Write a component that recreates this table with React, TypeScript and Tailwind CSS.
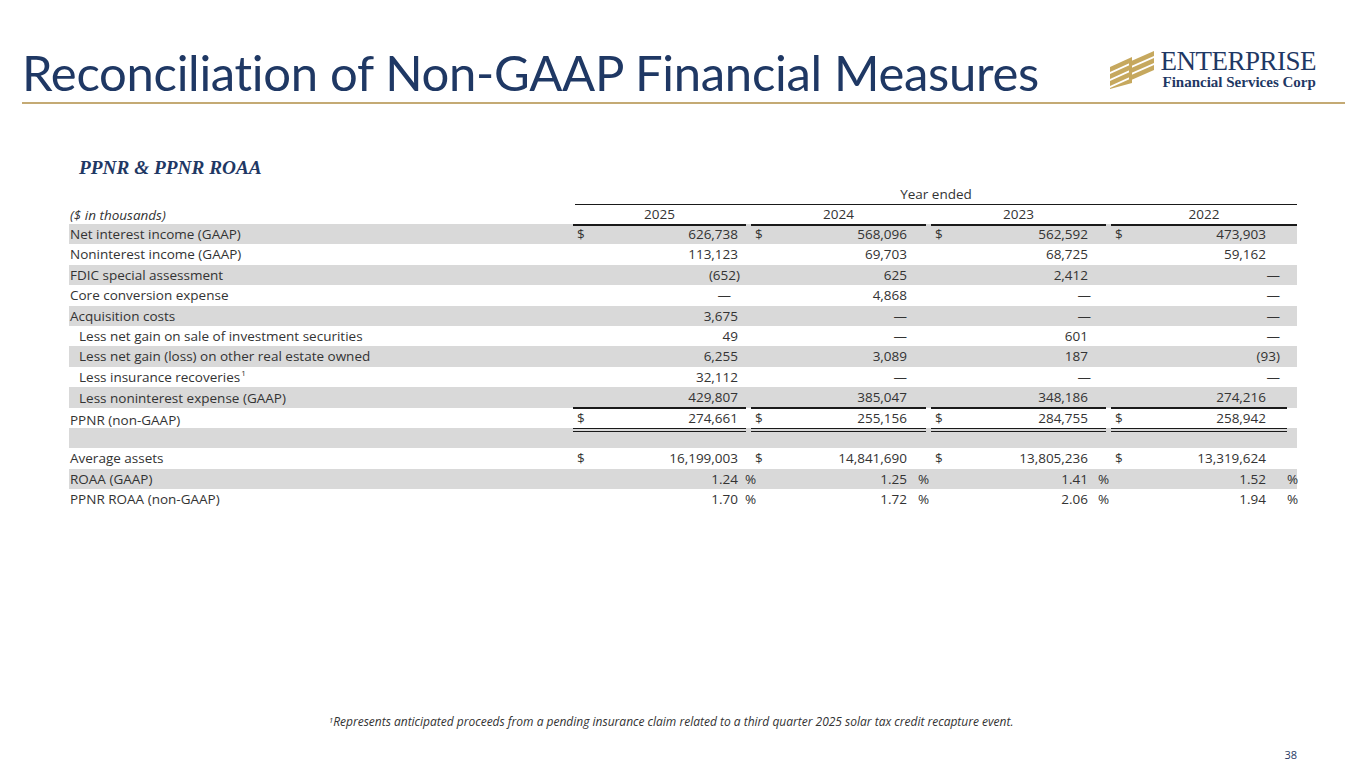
import React from 'react'

type Row = {
    label: string
    sup?: string
    indent?: boolean
    vals?: string[]
    dollar?: boolean
    pct?: boolean
    shade?: boolean
    line?: 'single' | 'double'
}

const rows: Row[] = [
    { label: 'Net interest income (GAAP)', vals: ['626,738', '568,096', '562,592', '473,903'], dollar: true, shade: true },
    { label: 'Noninterest income (GAAP)', vals: ['113,123', '69,703', '68,725', '59,162'] },
    { label: 'FDIC special assessment', vals: ['(652)', '625', '2,412', '—'], shade: true },
    { label: 'Core conversion expense', vals: ['—', '4,868', '—', '—'] },
    { label: 'Acquisition costs', vals: ['3,675', '—', '—', '—'], shade: true },
    { label: 'Less net gain on sale of investment securities', indent: true, vals: ['49', '—', '601', '—'] },
    { label: 'Less net gain (loss) on other real estate owned', indent: true, vals: ['6,255', '3,089', '187', '(93)'], shade: true },
    { label: 'Less insurance recoveries', sup: '1', indent: true, vals: ['32,112', '—', '—', '—'] },
    { label: 'Less noninterest expense (GAAP)', indent: true, vals: ['429,807', '385,047', '348,186', '274,216'], shade: true, line: 'single' },
    { label: 'PPNR (non-GAAP)', vals: ['274,661', '255,156', '284,755', '258,942'], dollar: true, line: 'double' },
    { label: '', shade: true },
    { label: 'Average assets', vals: ['16,199,003', '14,841,690', '13,805,236', '13,319,624'], dollar: true },
    { label: 'ROAA (GAAP)', vals: ['1.24', '1.25', '1.41', '1.52'], pct: true, shade: true },
    { label: 'PPNR ROAA (non-GAAP)', vals: ['1.70', '1.72', '2.06', '1.94'], pct: true },
]

// per year column tweaks (excel accounting alignment)
const cols = [
    { year: '2025', mr: 'mr-[5px]', pctBox: 'w-[8px] pl-[7px]', dash: 'mr-[7px]', paren: '-mr-[2px]' },
    { year: '2024', mr: 'mr-[5px]', pctBox: 'w-[19px] pl-[11px]', dash: '', paren: '' },
    { year: '2023', mr: 'mr-[5px]', pctBox: 'w-[18px] pl-[10px]', dash: '-mr-[3px]', paren: '' },
    { year: '2022', mr: 'mr-[10px]', pctBox: 'w-[20px] pl-[21px]', dash: '-mr-[14px]', paren: '-mr-[14px]' },
]

const gridCls = 'grid grid-cols-[504px_178px_180px_180px_186px]'

function LogoMark() {
    return (
        <svg width="50" height="40" viewBox="0 0 50 40" className="shrink-0">
            <g fill="#c6a85e">
                <polygon points="22,13 47,2 47,7 22,18" />
                <polygon points="22,20 47,9 47,14 22,25" />
                <polygon points="22,27 47,16 47,21 22,32" />
                <polygon points="3,18 25,8 25,13 3,23" />
                <polygon points="3,25 25,15 25,20 3,30" />
                <polygon points="3,32 25,22 25,27 3,37" />
                <polygon points="3,39 25,29 25,34 3,40" />
            </g>
        </svg>
    )
}

function DataRow({ row }: { row: Row }) {
    return (
        <div className={`${gridCls} h-[20.4px] ${row.shade ? 'bg-[#d9d9d9]' : ''}`}>
            <div className={`flex items-center whitespace-nowrap ${row.indent ? 'pl-[10px]' : 'pl-[1px]'}`}>
                {row.label}
                {row.sup && <sup className="text-[8px] ml-[1px] -top-[4px]">{row.sup}</sup>}
            </div>
            {cols.map((c, i) => {
                const v = row.vals?.[i]
                const border =
                    row.line === 'single'
                        ? 'border-b-[2px] border-[#1a1a1a]'
                        : row.line === 'double'
                            ? 'border-b-[4px] border-double border-[#1a1a1a]'
                            : ''
                const shift = v === '—' ? c.dash : v?.startsWith('(') ? c.paren : ''
                return (
                    <div key={c.year} className={`flex items-center h-full ${c.mr} ${border}`}>
                        <span className="pl-[4px]">{row.dollar ? '$' : ''}</span>
                        <span className="flex-1" />
                        <span className={`whitespace-nowrap ${shift}`}>{v ?? ''}</span>
                        <span className={`whitespace-nowrap shrink-0 ${c.pctBox}`}>{row.pct ? '%' : ''}</span>
                    </div>
                )
            })}
        </div>
    )
}

export default function App() {
    return (
        <div className="w-[1365px] h-[768px] bg-white overflow-hidden flex flex-col font-['Open_Sans','Lato',sans-serif] text-[#333]">
            {/* header */}
            <div className="flex items-start px-[22px] pt-[43px]">
                <h1 className="font-['Lato',sans-serif] text-[49px] leading-[58px] tracking-[-0.3px] text-[#1f3864] whitespace-nowrap">
                    Reconciliation of Non-GAAP Financial Measures
                </h1>
                <div className="ml-auto mr-[27px] mt-[5px] flex items-center gap-[3px]">
                    <LogoMark />
                    <div className="flex flex-col font-['Liberation_Serif',serif] text-[#1f3864]">
                        <span className="text-[27px] leading-[27px] tracking-[-0.5px] whitespace-nowrap">ENTERPRISE</span>
                        <span className="text-[15px] leading-[15px] font-bold whitespace-nowrap pl-[2px]">Financial Services Corp</span>
                    </div>
                </div>
            </div>
            <div className="mx-[22px] mr-[20px] mt-[1px] h-[2px] bg-[#c4aa74]" />

            {/* section title */}
            <div className="ml-[79px] mt-[53px] h-[22px] leading-[22px] text-[19.3px] font-bold italic text-[#1f3864] font-['Liberation_Serif',serif]">
                PPNR &amp; PPNR ROAA
            </div>

            {/* table */}
            <div className="ml-[69px] mt-[5px] w-[1228px] text-[13.5px]">
                <div className="grid grid-cols-[504px_724px] h-[20px]">
                    <div />
                    <div className="flex items-center justify-center border-b-[1.5px] border-[#1a1a1a] ml-[2px]">Year ended</div>
                </div>
                <div className={`${gridCls} h-[20px]`}>
                    <div className="flex items-center italic pl-[1px]">($ in thousands)</div>
                    {cols.map((c) => (
                        <div key={c.year} className={`flex items-center justify-center border-b-[2px] border-[#1a1a1a] ${c.year === '2022' ? '' : 'mr-[5px]'}`}>
                            {c.year}
                        </div>
                    ))}
                </div>
                {rows.map((r, i) => (
                    <DataRow key={i} row={r} />
                ))}
            </div>

            {/* footer */}
            <div className="mt-auto ml-[329px] h-[14px] leading-[14px] text-[12px] italic text-[#333] whitespace-nowrap">
                <sup className="text-[7.5px] -top-[3px]">1</sup>Represents anticipated proceeds from a pending insurance claim related to a third quarter 2025 solar tax credit recapture event.
            </div>
            <div className="mt-[19px] mb-[6px] pr-[68px] h-[14px] leading-[14px] text-right text-[11px] text-[#1f3864]">38</div>
        </div>
    )
}
